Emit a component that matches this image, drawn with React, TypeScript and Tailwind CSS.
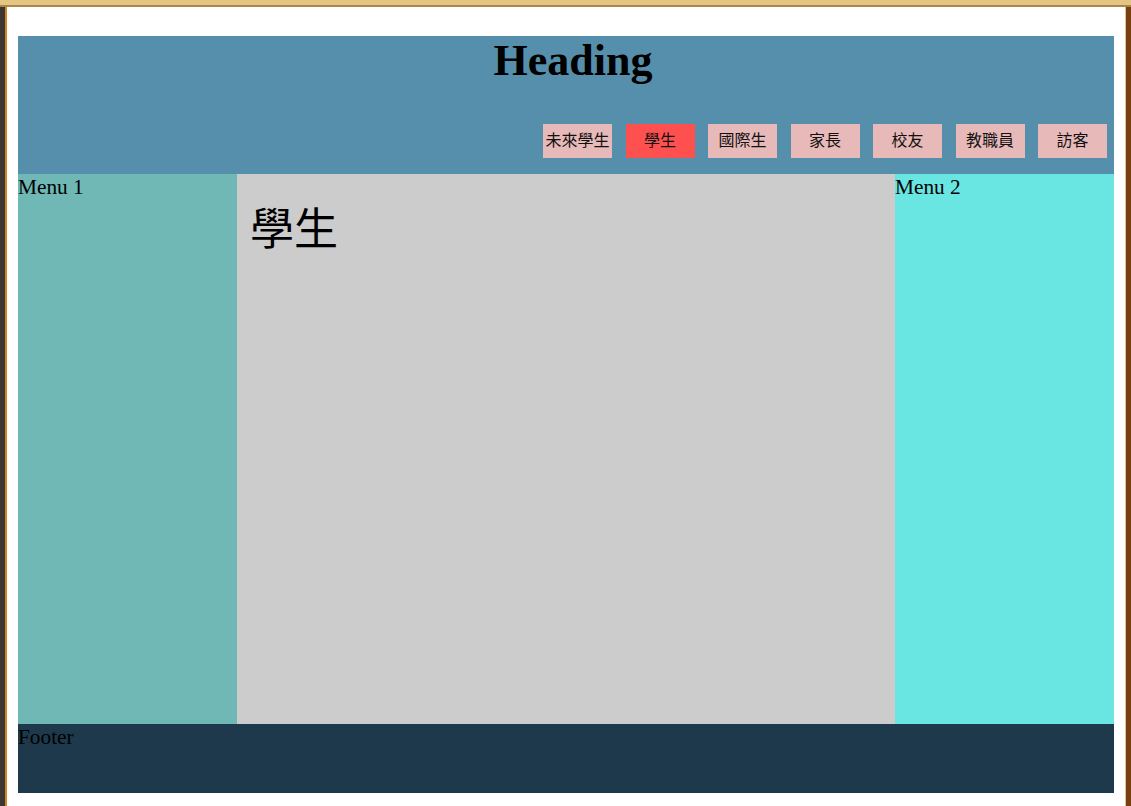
import React from 'react';

const tabs = ['未來學生', '學生', '國際生', '家長', '校友', '教職員', '訪客'];

export default function App() {
  const active = '學生';

  return (
    <div className="flex h-[806px] w-[1131px] flex-col overflow-hidden bg-white font-['Liberation_Serif','Noto_Sans_CJK_TC',serif] text-black">
      {/* window frame top */}
      <div className="h-[7px] shrink-0 border-b-2 border-[#a8884a] bg-[#e4c582]" />
      <div className="flex flex-1">
        <div className="flex w-[7px] shrink-0">
          <div className="w-[5px] bg-[#3b3631]" />
          <div className="w-[2px] bg-[#d3841f]" />
        </div>

        <div className="flex flex-1 flex-col px-[11px] pt-[29px]">
          {/* header */}
          <header className="flex h-[138px] flex-col bg-[#568fab]">
            <h1 className="m-0 pl-[14px] text-center text-[44px] font-bold leading-[50px]">Heading</h1>
            <nav className="mt-auto mb-[16px] flex justify-end gap-[13.5px] pr-[7px]">
              {tabs.map((t) => (
                <button
                  key={t}
                  className={`flex h-[34px] w-[69px] items-center justify-center font-['Liberation_Sans','Noto_Sans_CJK_TC',sans-serif] text-[16px] text-[#111] ${
                    t === active ? 'bg-[#ff5050]' : 'bg-[#e8b9b9]'
                  }`}
                >
                  {t}
                </button>
              ))}
            </nav>
          </header>

          {/* body */}
          <div className="flex h-[550px]">
            <aside className="w-[219px] bg-[#70b8b5] text-[21.3px] leading-[26px]">Menu 1</aside>
            <main className="flex-1 bg-[#cccccc] px-[13px] pt-[35px]">
              <h2 className="text-[44px] font-normal leading-none">學生</h2>
            </main>
            <aside className="w-[219px] bg-[#69e5e2] text-[21.3px] leading-[26px]">Menu 2</aside>
          </div>

          {/* footer */}
          <footer className="h-[69px] bg-[#1e394b] text-[21.3px] leading-[26px]">Footer</footer>
        </div>

        <div className="flex w-[6px] shrink-0">
          <div className="w-[1px] bg-[#d9c8a0]" />
          <div className="w-[5px] bg-[#7a3f10]" />
        </div>
      </div>
    </div>
  );
}
